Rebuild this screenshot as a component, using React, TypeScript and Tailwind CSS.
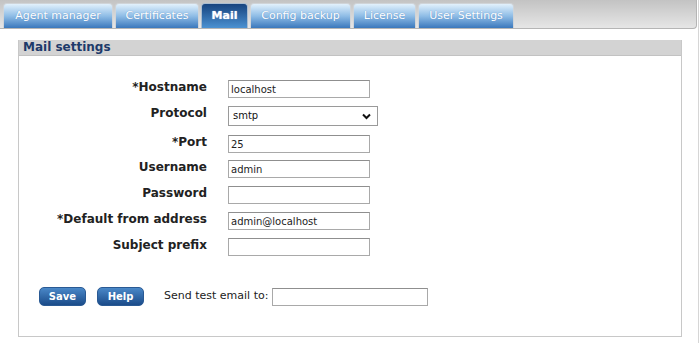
import React from "react";

const tabs = [
  { label: "Agent manager", w: "w-[110px]" },
  { label: "Certificates", w: "w-[84px]" },
  { label: "Mail", w: "w-[47px]", active: true },
  { label: "Config backup", w: "w-[101px]" },
  { label: "License", w: "w-[63px]" },
  { label: "User Settings", w: "w-[96px]" },
];

function Label({ children }: { children: React.ReactNode }) {
  return (
    <div className="w-[188px] text-right font-bold text-[12px] leading-[14px] text-[#222]">
      {children}
    </div>
  );
}

function TextInput({ value, w = "w-[142px]" }: { value?: string; w?: string }) {
  return (
    <input
      readOnly
      defaultValue={value}
      className={`${w} h-[18px] border border-[#a9a9a9] border-t-[#8f8f8f] bg-white px-[2px] text-[10px] text-[#222] outline-none`}
      style={{ fontFamily: "'DejaVu Sans', Verdana, sans-serif" }}
    />
  );
}

export default function App() {
  return (
    <div
      className="w-[699px] h-[343px] bg-white border-r border-[#d6d6d6]"
      style={{ fontFamily: "'DejaVu Sans', Verdana, sans-serif" }}
    >
      {/* top tab bar */}
      <div className="w-[697px] h-[29px] bg-gradient-to-b from-[#c3c3c3] to-[#e6e6e6] border-b border-[#b5b5b5] border-r rounded-br-[4px] flex items-end pl-[3px] gap-[2px]">
        {tabs.map((t) =>
          t.active ? (
            <div
              key={t.label}
              className={`${t.w} h-[25px] rounded-t-[4px] bg-gradient-to-b from-[#17447f] to-[#4c92d2] border border-b-0 border-[#a9bcd0] flex items-center justify-center text-white font-bold text-[11px] [text-shadow:0_0_1px_#c9d9ec]`}
            >
              {t.label}
            </div>
          ) : (
            <div
              key={t.label}
              className={`${t.w} h-[25px] rounded-t-[4px] bg-gradient-to-b from-[#e2f1fc] via-[#8fbde6] to-[#3a78bc] border border-b-0 border-[#d0d4d8] flex items-center justify-center text-white text-[11px] [text-shadow:0_0_1px_#5a8ac0]`}
            >
              {t.label}
            </div>
          )
        )}
      </div>

      {/* Mail settings box */}
      <div className="ml-[18px] mt-[11px] w-[664px] h-[297px] border border-t-0 border-[#c8c8c8]">
        <div className="h-[16px] bg-[#d3d3d3] border-b border-[#c2c2c2] pl-[4px] text-[12px] leading-[15px] font-bold text-[#1d3a6a]">
          Mail settings
        </div>

        <div className="flex flex-col pt-[24px]">
          <div className="flex items-start gap-[21px]">
            <Label>*Hostname</Label>
            <TextInput value="localhost" />
          </div>
          <div className="flex items-start gap-[21px] mt-[8px]">
            <Label>Protocol</Label>
            <div className="relative w-[150px] h-[20px] border border-[#9a9a9a] bg-white">
              <span className="absolute left-[4px] top-[3px] text-[10px] leading-[12px] text-[#111]">smtp</span>
              <svg
                className="absolute right-[6px] top-[6px]"
                width="9"
                height="7"
                viewBox="0 0 9 7"
              >
                <path d="M1 1.5 L4.5 5 L8 1.5" stroke="#111" strokeWidth="2" fill="none" />
              </svg>
            </div>
          </div>
          <div className="flex items-start gap-[21px] mt-[9px]">
            <Label>*Port</Label>
            <TextInput value="25" />
          </div>
          <div className="flex items-start gap-[21px] mt-[7px]">
            <Label>Username</Label>
            <TextInput value="admin" />
          </div>
          <div className="flex items-start gap-[21px] mt-[8px]">
            <Label>Password</Label>
            <TextInput />
          </div>
          <div className="flex items-start gap-[21px] mt-[8px]">
            <Label>*Default from address</Label>
            <TextInput value="admin@localhost" />
          </div>
          <div className="flex items-start gap-[21px] mt-[8px]">
            <Label>Subject prefix</Label>
            <TextInput />
          </div>

          <div className="flex items-center mt-[31px] pl-[20px]">
            <button className="w-[47px] h-[19px] rounded-[5px] bg-gradient-to-b from-[#4a88c8] to-[#1b4c8a] border border-[#2a5a94] text-white font-bold text-[10px] leading-[17px]">
              Save
            </button>
            <button className="ml-[11px] w-[47px] h-[19px] rounded-[5px] bg-gradient-to-b from-[#4a88c8] to-[#1b4c8a] border border-[#2a5a94] text-white font-bold text-[10px] leading-[17px]">
              Help
            </button>
            <span className="ml-[20px] text-[11px] text-[#222]">Send test email to:</span>
            <input
              readOnly
              className="ml-[4px] w-[156px] h-[18px] border border-[#a9a9a9] border-t-[#8f8f8f] bg-white outline-none"
            />
          </div>
        </div>
      </div>
    </div>
  );
}
